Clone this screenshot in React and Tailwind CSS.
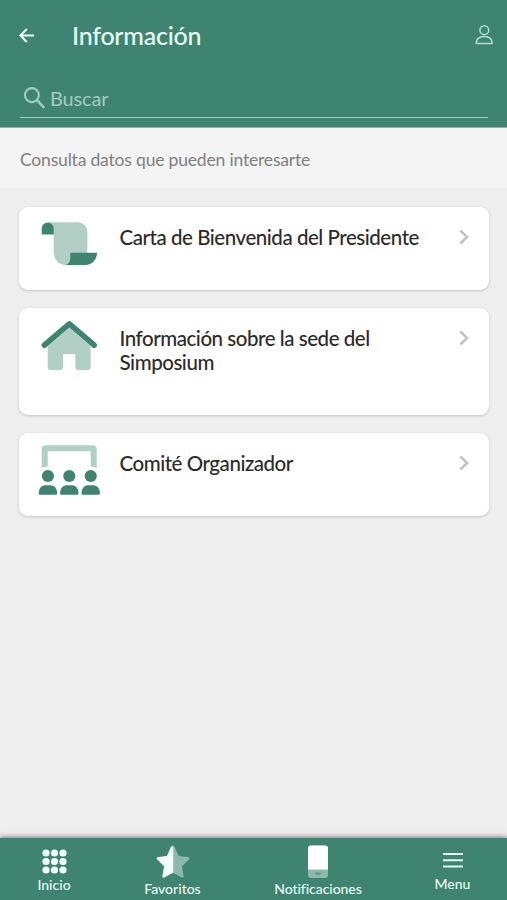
const ScrollIcon = () => (
  <svg className="block h-[56px] w-[62px]" viewBox="0 0 62 56">
    <path fill="#b2cfc5" d="M9.7 5.3H40a9.3 9.3 0 0 1 9.3 9.3V37L33 48h-5.5a11.8 11.8 0 0 1-11.8-11.8V17.3Z" />
    <path fill="#3f8470" d="M3.7 17.4v-6a6 6 0 0 1 12 0v6Z" />
    <path fill="#3f8470" d="M32.3 35.7H59c0 7-5 12.3-12 12.3H27.5c3.2-.8 4.8-3.4 4.8-7Z" />
  </svg>
);

const HouseIcon = () => (
  <svg className="block h-[56px] w-[62px]" viewBox="0 -1 62 56">
    <path fill="#b2cfc5" d="M31.3 8.7 52.7 27v21a3 3 0 0 1-3 3h-9.4a3 3 0 0 1-3-3V35H25v13a3 3 0 0 1-3 3h-9.3a3 3 0 0 1-3-3V27Z" />
    <path fill="none" stroke="#3f8470" strokeWidth="5.6" strokeLinecap="round" strokeLinejoin="round" d="M6.4 26.2 31.3 4.9 56.2 26.2" />
  </svg>
);

const CommitteeIcon = () => (
  <svg className="block h-[56px] w-[62px]" viewBox="0 0 62 56">
    <path fill="#b2cfc5" d="M3.7 25V6.3a4 4 0 0 1 4-4h47a4 4 0 0 1 4 4V25q-2.6-1.6-6-1.6V8.300h-43v15.100q-3.400 0-6 1.600Z" />
    {[9.9, 31.3, 52.7].map((x) => (
      <g key={x} fill="#3f8470" transform={`translate(${x} 0)`}>
        <circle cy="33" r="6.1" />
        <path d="M-9.2 50.5C-9.2 45.5-6.5 42.3-2.5 42.3H2.5C6.5 42.3 9.2 45.5 9.2 50.5Q9.2 51.7 8 51.7H-8Q-9.2 51.7-9.2 50.5Z" />
      </g>
    ))}
  </svg>
);

const Card = ({ icon, title, size }) => (
  <li className={`flex rounded-[9px] bg-white pl-[19px] shadow-[0_1px_3px_rgba(0,0,0,0.18)] ${size}`}>
    <div className="pt-[10px]">{icon}</div>
    <h2 className="ml-[19.5px] w-[310px] pt-[17.5px] text-[20.5px] leading-[24.5px] font-medium tracking-[-0.46px] text-[#2b2b2b]">{title}</h2>
    <svg className="mt-[22px] ml-[28.5px] h-4 w-3" viewBox="0 0 12 16" fill="none" stroke="#c2c2c2" strokeWidth="2.5">
      <path d="m2.3 1.5 6.8 6.5L2.3 14.5" />
    </svg>
  </li>
);

export default function App() {
  return (
    <div className="flex h-[900px] w-[507px] flex-col overflow-hidden bg-[#eeeeee] font-['Lato',sans-serif]">
      <header className="h-[128px] shrink-0 border-b border-[#8bb5a8] bg-[#3f8470]">
        <div className="flex h-[72px] items-center pl-[19px]">
          <svg className="h-4 w-4" viewBox="0 0 16 16" fill="none" stroke="#f0fffa" strokeWidth="1.9">
            <path d="M15 7.5H1.5M7.8 1 1.3 7.500l6.500 6.500" />
          </svg>
          <h1 className="ml-[37px] pb-[2px] text-[25px] leading-8 font-medium tracking-[-0.25px] text-[#e8fbf4]">Información</h1>
          <svg className="mr-[14px] mb-[2px] ml-auto h-5 w-[18px]" viewBox="0 0 18 20" fill="none" stroke="#b2e0d0" strokeWidth="1.5">
            <circle cx="9.3" cy="5.2" r="4.4" />
            <path strokeLinejoin="round" d="M1.2 18.5c0-4.400 2.800-6.900 8-6.900s8 2.500 8 6.900Z" />
          </svg>
        </div>
        <div className="mr-[19px] ml-5 flex h-[46px] items-center border-b-[1.5px] border-[#a0cdbf] pt-[7px] pl-[3px]">
          <svg className="h-6 w-6" viewBox="0 0 24 24" fill="none" stroke="#a0cdbf" strokeWidth="2.1">
            <circle cx="8.9" cy="9.1" r="7" />
            <path strokeWidth="2.5" d="m14 14.200 7.300 7.700" />
          </svg>
          <span className="ml-[3px] text-[20px] leading-6 tracking-[-0.15px] text-[#a0cdbf]">Buscar</span>
        </div>
      </header>
      <p className="h-[60px] shrink-0 bg-[#f4f4f4] pt-[20px] pl-5 text-[17.5px] leading-6 tracking-[-0.18px] text-[#808080]">Consulta datos que pueden interesarte</p>
      <ul className="flex flex-1 flex-col gap-[18px] pt-[19px] pr-[18px] pl-[19px]">
        <Card size="h-[83px]" icon={<ScrollIcon />} title="Carta de Bienvenida del Presidente" />
        <Card size="h-[107px]" icon={<HouseIcon />} title="Información sobre la sede del Simposium" />
        <Card size="h-[83px]" icon={<CommitteeIcon />} title="Comité Organizador" />
      </ul>
      <nav className="flex h-[62px] shrink-0 bg-[#3f8470] text-[14px] leading-4 font-medium text-[#e6faf3] shadow-[0_-1px_5px_rgba(0,0,0,0.5)]">
        <a className="flex w-[108px] flex-col items-center pt-[11px]">
          <svg className="h-[25px] w-[25px]" viewBox="0 0 25 25" fill="#f3fffb">
            {[4, 12.5, 21].map((x) => [4, 12.5, 21].map((y) => <circle key={`${x}-${y}`} cx={x} cy={y} r="3.6" />))}
          </svg>
          <span className="mt-[3px]">Inicio</span>
        </a>
        <a className="flex w-[129px] flex-col items-center pt-[7px]">
          <svg className="h-[34px] w-[36px]" viewBox="0 0 36 34" strokeWidth="2.5" strokeLinejoin="round">
            <path fill="#8cb9aa" stroke="#8cb9aa" d="m18 1.800 4.700 10.100 10.500 1.500-7.600 7.500 1.800 10.600-9.400-5Z" />
            <path fill="#f3fffb" stroke="#f3fffb" d="M17 2.500 12.800 11.900 2.800 13.400l7.600 7.500L8.600 31.500 17 27Z" />
          </svg>
          <span className="mt-[2px]">Favoritos</span>
        </a>
        <a className="flex w-[162px] flex-col items-center pt-[7px]">
          <svg className="h-[34px] w-[20px]" viewBox="0 0 20 34">
            <rect y=".5" width="20" height="32.5" rx="3" fill="#8cb9aa" />
            <path fill="#fff" d="M0 24.500v-21a3 3 0 0 1 3-3h14a3 3 0 0 1 3 3v21Z" />
            <rect x="7" y="27.5" width="6" height="2" rx="1" fill="#5f9584" />
          </svg>
          <span className="mt-[2px] tracking-[-0.05px]">Notificaciones</span>
        </a>
        <a className="flex w-[107px] flex-col items-center pt-[14px]">
          <svg className="h-4 w-[20px]" viewBox="0 0 20 16" stroke="#e6faf3" strokeWidth="2">
            <path d="M0 2h20M0 8.200h20M0 14.400h20" />
          </svg>
          <span className="mt-[8px]">Menu</span>
        </a>
      </nav>
    </div>
  );
}
